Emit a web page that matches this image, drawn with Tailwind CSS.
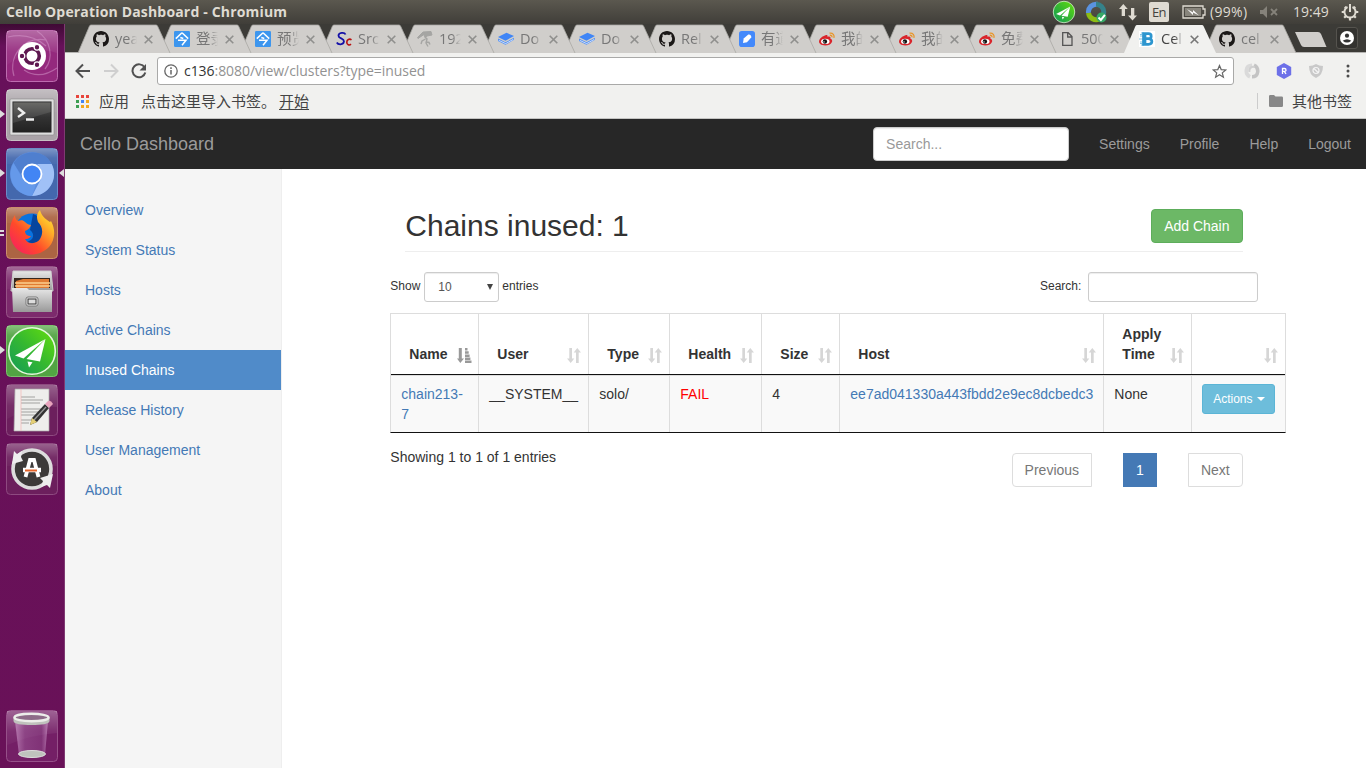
<!DOCTYPE html>
<html lang="zh">
<head>
<meta charset="utf-8">
<title>Cello Operation Dashboard</title>
<script src="https://cdn.jsdelivr.net/npm/@tailwindcss/browser@4"></script>
</head>
<body class="w-[1366px] h-[768px] overflow-hidden flex flex-col bg-white font-['Liberation_Sans',Arial,sans-serif] text-sm leading-5 text-[#333]">

<svg class="absolute w-0 h-0">
  <defs>
    <linearGradient id="gloss" x1="0" y1="0" x2="0" y2="1"><stop offset="0" stop-color="#fff" stop-opacity=".3"/><stop offset=".6" stop-color="#fff" stop-opacity=".07"/><stop offset="1" stop-color="#fff" stop-opacity=".03"/></linearGradient>
    <linearGradient id="metal" x1="0" y1="0" x2="0" y2="1"><stop offset="0" stop-color="#e8e8e8"/><stop offset="1" stop-color="#999"/></linearGradient>
    <linearGradient id="termbg" x1="0" y1="0" x2="0" y2="1"><stop offset="0" stop-color="#5b5b58"/><stop offset=".5" stop-color="#333"/><stop offset="1" stop-color="#222"/></linearGradient>
    <linearGradient id="green" x1="1" y1="0" x2="0" y2="1"><stop offset="0" stop-color="#66e00c"/><stop offset=".5" stop-color="#35b830"/><stop offset="1" stop-color="#119a5a"/></linearGradient>
    <linearGradient id="fox" x1="0" y1="1" x2="1" y2="0"><stop offset="0" stop-color="#f5156c"/><stop offset=".4" stop-color="#ff4a2a"/><stop offset=".75" stop-color="#ffb828"/><stop offset="1" stop-color="#fff04a"/></linearGradient>
    <linearGradient id="trash" x1="0" y1="0" x2="1" y2="0"><stop offset="0" stop-color="#d9a8d6" stop-opacity=".6"/><stop offset=".3" stop-color="#9a5796" stop-opacity=".55"/><stop offset=".8" stop-color="#8d4688" stop-opacity=".5"/><stop offset="1" stop-color="#d9a8d6" stop-opacity=".6"/></linearGradient>
    <symbol id="github" viewBox="0 0 16 16"><path fill="#1b1817" d="M8 0C3.58 0 0 3.58 0 8c0 3.54 2.29 6.53 5.47 7.59.4.07.55-.17.55-.38 0-.19-.01-.82-.01-1.49-2.01.37-2.53-.49-2.69-.94-.09-.23-.48-.94-.82-1.13-.28-.15-.68-.52-.01-.53.63-.01 1.08.58 1.23.82.72 1.21 1.87.87 2.33.66.07-.52.28-.87.51-1.07-1.78-.2-3.64-.89-3.64-3.95 0-.87.31-1.59.82-2.15-.08-.2-.36-1.02.08-2.12 0 0 .67-.21 2.2.82.64-.18 1.32-.27 2-.27s1.36.09 2 .27c1.53-1.04 2.2-.82 2.2-.82.44 1.1.16 1.92.08 2.12.51.56.82 1.27.82 2.15 0 3.07-1.87 3.75-3.65 3.95.29.25.54.73.54 1.48 0 1.07-.01 1.93-.01 2.2 0 .21.15.46.55.38A8.01 8.01 0 0 0 16 8c0-4.42-3.58-8-8-8z"/></symbol>
    <symbol id="jin" viewBox="0 0 16 16"><rect width="16" height="16" rx="1.2" fill="#3d96ee"/><path d="M8 1.800L1.800 7.600M8 1.800l6.200 5.800M6.300 6.500l3 1M4 9.300h8L8 14.200" stroke="#fff" stroke-width="1.500" fill="none"/></symbol>
    <symbol id="sc" viewBox="0 0 16 16"><path d="M9.500 3.500C8.500 1 2.500 1.500 2.500 4.700c0 3.200 6 2.300 5.400 6C7.400 14.200 2 14 .8 11.500" stroke="#1410a8" stroke-width="1.800" fill="none"/><path d="M15.500 8.800c-2-1.400-4.700-.2-4.700 2.400s2.500 3.500 4.200 2" stroke="#b81111" stroke-width="1.600" fill="none"/></symbol>
    <symbol id="figure" viewBox="0 0 16 16"><g fill="#a5a5a3" stroke="#a5a5a3"><path d="M6 1l8 -.5 1 3.500-5 1-2 1.500-1-3-6 4-.5-1z"/><path d="M8 6l2 2-1 4 2 3.500M8.500 8L5 10l-1 3M9 11l3 .5 1 2" fill="none" stroke-width="1.400"/></g></symbol>
    <symbol id="book" viewBox="0 0 16 16"><path d="M0 6L8.500 1.800 16 5 7.500 9.700z" fill="#3f85f6"/><path d="M0 7.500l7.500 3.800L16 6.800v2L7.500 13.800 0 10z" fill="#4b8df5"/><path d="M.7 9.300l7 3.300L15.400 8.300" stroke="#e8f0ff" stroke-width=".8" fill="none"/></symbol>
    <symbol id="pen" viewBox="0 0 16 16"><rect width="16" height="16" rx="2.800" fill="#4389fb"/><path d="M4 12l.7-4.400L9.300 3.500c1.700-.6 3.500 1.200 2.900 3L8 11.200z" fill="#fff"/></symbol>
    <symbol id="weibo" viewBox="0 0 16 16"><path d="M6.500 4.300c1.700-.6 2.300.1 1.900 1.500 2-.8 3.700-.2 2.900 1.600 4 1.500 1.400 7.100-5 7.100C2 14.500 0 12.500 0 10.600c0-2.800 3.500-5.500 6.500-6.300z" fill="#d9252b"/><ellipse cx="6.300" cy="10.400" rx="4.200" ry="2.700" fill="#fff"/><circle cx="5.900" cy="10.500" r="2.200" fill="#111"/><circle cx="5" cy="10.900" r=".7" fill="#fff"/><path d="M10.500 2.200c3.500-.6 5.200 2 4.300 4.700M10.800 4.300c1.700-.2 2.400.8 2 2" stroke="#e9962a" stroke-width="1.300" fill="none"/></symbol>
    <symbol id="page" viewBox="0 0 16 16"><path d="M3.700 1.700h5.500l3.800 3.800v8.800H3.700zM8.700 1.700V6H13" fill="none" stroke="#555" stroke-width="1.300"/></symbol>
    <symbol id="cello" viewBox="0 0 16 16"><rect width="16" height="16" fill="#fff"/><path d="M2 2h3M1 5h3M0 8h4M1 11h3M2 14h3M1 3.500h2M1 12.500h2" stroke="#7fc3e6" stroke-width="1.200"/><path d="M4.500 2.700H9.500c3.600 0 3.600 4.800 0 5 4.500.2 4.500 5.600 0 5.600H4.500zM6 2v12M4.500 7.700h5" stroke="#2d96cf" stroke-width="2.700" fill="none"/></symbol>
    <symbol id="plane" viewBox="0 0 52 52"><circle cx="26" cy="26" r="23.300" fill="url(#green)" stroke="#e5f8dd" stroke-width="1.600"/><path d="M39.500 14L9 30.500l8.500 3z" fill="#fff"/><path d="M39.500 14L20.500 34l13.500 2.500z" fill="#fff"/><path d="M21.500 36.500l5 .8-3.500 5.200z" fill="#fff"/></symbol>
    <symbol id="sort" viewBox="0 0 14 15"><path d="M2.300 0h2.700v10.500H7.300L3.700 15 0 10.500h2.300zM9 15V4.500H6.700L10.300 0l3.700 4.500h-2.300V15z" fill="#d6d6d6"/></symbol>
    <symbol id="sortasc" viewBox="0 0 15 15"><path d="M1.800 0h3v10.500H7L3.300 15 0 10.500h1.800zM8 0h2.500v2.500H8zM8 3.200h3.700v2.500H8zM8 6.400h4.600v2.500H8zM8 9.500h5.400v2.500H8zM8 12.600h6.500V15H8z" fill="#999"/></symbol>
  </defs>
</svg>

<!-- system panel -->
<div class="h-6 shrink-0 flex items-center bg-linear-to-b from-[#5b584f] to-[#403e39] text-[#dfdbd2] font-['Open_Sans','Noto_Sans',sans-serif]">
  <div class="ml-1.5 w-[700px] text-[14px] font-bold tracking-[0.17px] whitespace-nowrap">Cello Operation Dashboard - Chromium</div>
  <div class="ml-auto flex items-center">
    <svg class="size-6"><use href="#plane"/></svg>
    <svg class="size-[22px] ml-[9px]" viewBox="0 0 22 22" fill="none" stroke-width="5"><path d="M3.500 12a7.800 7.800 0 0 1 9-8.700" stroke="#5a93e0"/><path d="M11 3.200A7.800 7.800 0 0 1 18.800 11c0 2-1 4-2 5" stroke="#35828a"/><path d="M3.500 12a7.800 7.800 0 0 0 11 6" stroke="#8dbd13"/><circle cx="16.500" cy="16.500" r="5" fill="#36a967" stroke="none"/><path d="M13.500 16.500l2.400 2.400 4-5" stroke="#fff" stroke-width="2"/></svg>
    <svg class="w-[18px] h-[18px] ml-3" viewBox="0 0 18 18"><path d="M4.300 1l4.500 5H6v7H2.700V6H0zM13.500 17.500l4.500-5h-2.700V5H12v7.500H9z" fill="#dfdbd2"/></svg>
    <div class="ml-3 w-5 h-5 rounded-[2px] bg-[#dfdbd2] text-[#45433e] text-[13px] leading-5 text-center tracking-[-0.5px]">En</div>
    <svg class="w-6 h-[14px] ml-[13px]" viewBox="0 0 24 14"><path d="M1 1h20v3h2v6h-2v3H1z" fill="none" stroke="#dfdbd2" stroke-width="1.300"/><path d="M3 3h16v8H3z" fill="#88857c"/><path d="M5 4l6 3.500V5l6 5.500-6-3V10z" fill="#fff"/></svg>
    <div class="ml-[4px] w-[39px] text-[14px] whitespace-nowrap tracking-[0.3px]">(99%)</div>
    <svg class="w-[19px] h-3 ml-[11px]" viewBox="0 0 19 12"><path d="M0 4h3l4-4v12L3 8H0z" fill="#85827a"/><path d="M11 3l6 6M17 3l-6 6" stroke="#85827a" stroke-width="1.800"/></svg>
    <div class="ml-[14px] w-[37px] text-[14px] whitespace-nowrap">19:49</div>
    <svg class="size-[18px] ml-[11px] mr-[7px]" viewBox="0 0 18 18" fill="none" stroke="#dfdbd2"><path d="M6.500 4a5.600 5.600 0 1 0 5 0" stroke-width="2"/><path d="M9 1v8" stroke-width="2"/><path d="M3.800 3.800l1.700 1.700M14.200 3.800l-1.700 1.700M.7 9h3M14.300 9h3M3.200 14.800L5 13M14.800 14.800L13 13M9 17.500v-3" stroke-width="2.200"/></svg>
  </div>
</div>

<div class="flex-1 min-h-0 flex">
  <!-- launcher -->
  <nav class="w-[65px] shrink-0 bg-linear-to-b from-[#3f0a35] via-[#67105a] via-3% to-[#691158] border-r border-[#7f3a72] flex flex-col items-center gap-[7px] pt-1.5 pb-1.5">
    <svg class="size-[52px] shrink-0" viewBox="0 0 52 52"><rect x=".5" y=".5" width="51" height="51" rx="4" fill="#94297d" stroke="#bd6caf"/><path d="M1 1h50v22Q28 14 1 35z" fill="url(#gloss)"/><path d="M8 46C2 27 17 6 40 10M31 1c14 9 17 27 8 38M18 40c12 8 23 5 33-2M2 7c17-4 29 1 38 9" stroke="#d89bcd" stroke-width="1.200" fill="none" opacity=".5"/><circle cx="26" cy="26" r="14" fill="#fff"/><circle cx="26" cy="26" r="7.300" fill="none" stroke="#5e1750" stroke-width="3.600"/><g fill="#5e1750" stroke="#fff" stroke-width="1.200"><circle cx="16" cy="26" r="2.800"/><circle cx="31" cy="17.300" r="2.800"/><circle cx="31" cy="34.700" r="2.800"/></g></svg>
    <div class="relative size-[52px] shrink-0"><svg viewBox="0 0 52 52"><rect x=".5" y=".5" width="51" height="51" rx="4" fill="#aaa3a8" stroke="#c7c1c5"/><path d="M1 1h50v22H1z" fill="url(#gloss)"/><rect x="4" y="10" width="44" height="36" rx="1" fill="#dedede" stroke="#888" stroke-width=".6"/><rect x="7" y="13" width="38" height="30" fill="url(#termbg)" stroke="#222"/><path d="M7 13h38v10L7 34z" fill="#fff" opacity=".1"/><path d="M12 19l6 5-6 4M20 30.500h8" fill="none" stroke="#eee" stroke-width="2.400"/></svg><svg class="absolute -left-1.5 top-[21px] w-[5px] h-2" viewBox="0 0 5 8"><path d="M0 0l5 4-5 4z" fill="#ddd"/></svg></div>
    <div class="relative size-[52px] shrink-0"><svg viewBox="0 0 52 52"><rect x=".5" y=".5" width="51" height="51" rx="4" fill="#4468ad" stroke="#6b8cc8"/><path d="M1 1h50v15H1z" fill="url(#gloss)"/><circle cx="26" cy="26" r="22" fill="#5b8ddf"/><path d="M7.500 15A22 22 0 0 1 45.700 16H26q-7 1-10 12z" fill="#4f7fcf"/><path d="M26 16h19.700A22 22 0 0 1 26 48l9-17q3-9-4-15z" fill="#a0c1f7"/><path d="M7.500 15L18 33q5 5 12 3l-4 12A22 22 0 0 1 7.500 15z" fill="#6599ea"/><circle cx="26" cy="26" r="9.500" fill="#4285f4" stroke="#fff" stroke-width="1.800"/></svg><svg class="absolute -left-1.5 top-[21px] w-[5px] h-2" viewBox="0 0 5 8"><path d="M0 0l5 4-5 4z" fill="#ddd"/></svg><svg class="absolute -right-1.5 top-[21px] w-[5px] h-2" viewBox="0 0 5 8"><path d="M5 0L0 4l5 4z" fill="#ddd"/></svg></div>
    <div class="relative size-[52px] shrink-0"><svg viewBox="0 0 52 52"><rect x=".5" y=".5" width="51" height="51" rx="4" fill="#ac6443" stroke="#cc8e6c"/><path d="M1 1h50v15H1z" fill="url(#gloss)"/><circle cx="26" cy="24" r="17.500" fill="#0a73df"/><path d="M27 7c8 2 13 13 10 23-3 7-10 7-16 5 7-2 8-8 3-12z" fill="#06459e"/><path d="M9 8c0 3 1 5 3 6 3-1 5-1 7 1 2 2 4 3 6 3-1 3-3 5-6 6 0 3 2 5 6 5-2 3-4 3-6 3 3 6 12 5 15 0 4-7 2-13-2-17-2-5-1-9 2-12 1 5 5 9 10 12l1-1c5 9 4 19-2 26-10 10-26 10-34 0C1 30 3 17 9 8z" fill="url(#fox)"/></svg><div class="absolute -left-1.5 top-[23px] w-1 h-[6px] border-y-2 border-[#ddd]"></div></div>
    <svg class="size-[52px] shrink-0" viewBox="0 0 52 52"><rect x=".5" y=".5" width="51" height="51" rx="4" fill="#7c2a6c" stroke="#965386"/><path d="M1 1h50v22H1z" fill="url(#gloss)"/><path d="M7 5h38l2 20H5z" fill="url(#metal)" stroke="#ccc"/><path d="M8 12h36v10H8z" fill="#35271f"/><path d="M10 15l7-2h26v9H10z" fill="#e07b32"/><path d="M9 17h35M9 20h35" stroke="#fbd08e" stroke-width="1.500"/><path d="M6 22h15l2 2h23v22H7z" fill="url(#metal)"/><rect x="20" y="31" width="12" height="9" rx="2" fill="#eee" stroke="#777"/><rect x="22" y="33" width="8" height="5" fill="#ddd" stroke="#333"/></svg>
    <div class="relative size-[52px] shrink-0"><svg viewBox="0 0 52 52"><rect x=".5" y=".5" width="51" height="51" rx="4" fill="#52a443" stroke="#7bc26c"/><path d="M1 1h50v15H1z" fill="url(#gloss)"/><use href="#plane"/></svg><svg class="absolute -left-1.5 top-[21px] w-[5px] h-2" viewBox="0 0 5 8"><path d="M0 0l5 4-5 4z" fill="#ddd"/></svg></div>
    <svg class="size-[52px] shrink-0" viewBox="0 0 52 52"><rect x=".5" y=".5" width="51" height="51" rx="4" fill="#6c1f5d" stroke="#8e4a80"/><path d="M1 1h50v22Q28 20 1 35z" fill="url(#gloss)"/><path d="M9 5h34v42H8z" fill="#eeeeec" stroke="#aaa" stroke-width=".7"/><path d="M15 13h14M15 16h22M15 19h19M15 25h20M15 28h21M15 31h14M15 36h11M15 39h8" stroke="#999" stroke-width=".9"/><path d="M15 5v42" stroke="#f5b5b5" stroke-width=".7"/><path d="M24 41l2-7 13-14 4 4-12 14z" fill="#333"/><path d="M28 36l12-13" stroke="#999" stroke-width="1.300"/><path d="M24 41l2-7 5 4z" fill="#e4cf75"/><path d="M39 20l3-3q3-1 5 3l-4 4z" fill="#e8a3bd"/></svg>
    <svg class="size-[52px] shrink-0" viewBox="0 0 52 52"><rect x=".5" y=".5" width="51" height="51" rx="4" fill="#6c1f5d" stroke="#8e4a80"/><path d="M1 1h50v22H1z" fill="url(#gloss)"/><circle cx="26" cy="26" r="19" fill="#3c3a39" stroke="#ddd" stroke-width="3.600"/><path d="M6 21l2-13 3 3 5-3-1 6 2 4zM47 31l-3 14-3-3-6 2 2-6-3-3z" fill="#eee"/><path d="M19.500 34L24 17h4l4.500 17" fill="none" stroke="#fff" stroke-width="3.800"/><path d="M17 27h18" stroke="#fff" stroke-width="4.500"/><path d="M19 27.500h12" stroke="#e4642b" stroke-width="2"/></svg>
    <svg class="size-[52px] shrink-0 mt-auto" viewBox="0 0 52 52"><rect x=".5" y=".5" width="51" height="51" rx="4" fill="#741f66" stroke="#965089"/><path d="M1 1h50v22Q28 24 1 35z" fill="url(#gloss)"/><path d="M9 11h33l-3 34H13z" fill="url(#trash)"/><ellipse cx="26" cy="44" rx="13.500" ry="3.500" fill="#bfc2bd" stroke="#ddd"/><path d="M7.500 7v4c0 3 8 4 18 4s18-1 18-4V7z" fill="#bfc2bd"/><ellipse cx="25.500" cy="7.500" rx="17" ry="3.700" fill="#8d6c88" stroke="#eceeea" stroke-width="2.400"/></svg>
  </nav>

  <div class="flex-1 min-w-0 flex flex-col">
    <!-- tab strip -->
    <div class="h-[29px] shrink-0 flex bg-[#3c3b37] border-b border-[#b5b4b2] pl-[13px] font-['Open_Sans','Noto_Sans_CJK_SC',sans-serif]">
      <div id="tabs" class="flex isolate"></div>
      <svg class="w-8 h-[15px] ml-[11px] mt-2" viewBox="0 0 32 15"><path d="M0 0h23q2 0 3 2l5.500 13H9q-2 0-3-2z" fill="#d0cecb"/></svg>
      <div class="ml-auto mr-2 mt-[3px] size-[22px] rounded-[3px] border border-[#55534e] bg-[#33322f] flex items-center justify-center"><svg class="size-[14px]" viewBox="0 0 14 14"><circle cx="7" cy="7" r="7" fill="#fff"/><circle cx="7" cy="4.700" r="2.100" fill="#333"/><path d="M2.700 9.700Q7 6.700 11.300 9.700 7 13.500 2.700 9.700z" fill="#333"/></svg></div>
    </div>

    <!-- address bar -->
    <div class="h-[33px] shrink-0 flex items-center bg-[#f1f1ef] pl-[10px] pr-[14px] pt-[3px] font-['Open_Sans','Noto_Sans',sans-serif]">
      <svg class="size-4 shrink-0" viewBox="0 0 16 16"><path d="M15 8H1.500M8 1.500L1.500 8 8 14.500" fill="none" stroke="#505050" stroke-width="2"/></svg>
      <svg class="size-4 shrink-0 ml-3" viewBox="0 0 16 16"><path d="M1 8h13.500M8 1.500L14.500 8 8 14.500" fill="none" stroke="#cfcfcf" stroke-width="2"/></svg>
      <svg class="size-4 shrink-0 ml-3" viewBox="0 0 16 16"><path d="M13.600 4.500A6.500 6.500 0 1 0 14.300 9.500" fill="none" stroke="#505050" stroke-width="2"/><path d="M15 1v6.500H8.500z" fill="#505050"/></svg>
      <div class="ml-[10px] w-[1077px] h-7 shrink-0 rounded-[3px] border border-[#a9a9a8] bg-white flex items-center px-1.5">
        <svg class="size-[14px]" viewBox="0 0 14 14"><circle cx="7" cy="7" r="6.200" fill="none" stroke="#666" stroke-width="1.300"/><path d="M7 6v4.500M7 3.300v1.600" stroke="#666" stroke-width="1.500"/></svg>
        <span class="ml-1.5 text-[14px] tracking-[-0.05px] text-[#929292]"><span class="text-[#333]">c136</span>:8080/view/clusters?type=inused</span>
        <svg class="ml-auto size-[15px]" viewBox="0 0 15 15"><path d="M7.500 1.500l1.700 4.100 4.500.4-3.400 2.900 1.100 4.300-3.900-2.400-3.900 2.400 1.100-4.300L1.300 6l4.500-.4z" fill="none" stroke="#666" stroke-width="1.200"/></svg>
      </div>
      <svg class="size-4 ml-[10px]" viewBox="0 0 16 16" fill="none" stroke-width="3.500"><path d="M8 2.200c-7 0-7.500 9-2 11.600" stroke="#dadada"/><path d="M8 13.800c7 0 7.500-9 2-11.600" stroke="#c4c4c4"/><path d="M5.500 9C4.500 5 8 3 10.500 4" stroke="#d0d0d0" stroke-width="2"/></svg>
      <svg class="size-4 ml-4" viewBox="0 0 16 16"><path d="M8 0l7.200 4v8L8 16 .8 12V4z" fill="#6d70e8"/><path d="M6.500 11V5.500h2q1.500 0 1.500 1.500T8.500 8.300h-2M8.300 8.300L10 11" fill="none" stroke="#fff" stroke-width="1.300"/></svg>
      <svg class="w-[14px] h-[14px] ml-[17px]" viewBox="0 0 14 14"><path d="M7 0q3 2 7 2 0 9-7 12Q0 11 0 2q4 0 7-2z" fill="#c9c9c9"/><circle cx="7" cy="6.500" r="3" fill="none" stroke="#f4f4f4" stroke-width="1.200"/><path d="M5 4.500l4 4" stroke="#f4f4f4" stroke-width="1.200"/></svg>
      <svg class="w-1 h-[14px] ml-auto mr-[2px]" viewBox="0 0 4 14"><g fill="#4b4b4b"><circle cx="2" cy="2" r="1.500"/><circle cx="2" cy="7" r="1.500"/><circle cx="2" cy="12" r="1.500"/></g></svg>
    </div>

    <!-- bookmarks -->
    <div class="h-[33px] shrink-0 flex items-center bg-[#f1f1ef] border-b border-[#c4c4c2] pl-[11px] pr-[14px] pb-[2px] text-[15px] text-[#444] font-['Noto_Sans_CJK_SC',sans-serif]">
      <svg class="size-[13px]" viewBox="0 0 13 13"><g fill="#e8453c"><path d="M0 0h3v3H0zM5 0h3v3H5zM10 0h3v3h-3z"/></g><path d="M0 5h3v3H0zM0 10h3v3H0z" fill="#3d9e52"/><path d="M5 5h3v3H5z" fill="#4285f4"/><path d="M10 5h3v3h-3zM5 10h3v3H5zM10 10h3v3h-3z" fill="#f2a81d"/></svg>
      <span class="ml-[10px]">应用</span>
      <span class="ml-3">点击这里导入书签。</span>
      <span class="ml-[3px] underline underline-offset-2">开始</span>
      <span class="ml-auto w-px h-4 bg-[#ccc]"></span>
      <svg class="w-[14px] h-3 ml-[11px]" viewBox="0 0 14 12"><path d="M0 1.300Q0 0 1.300 0H5l1.500 1.500h6.200Q14 1.500 14 2.800v7.900q0 1.300-1.300 1.300H1.300Q0 12 0 10.700z" fill="#888"/></svg>
      <span class="ml-[9px]">其他书签</span>
    </div>

    <!-- page navbar -->
    <header class="h-[50px] shrink-0 flex items-center bg-[#272727] text-[#9b9b9b] pl-[15px]">
      <span class="text-lg">Cello Dashboard</span>
      <div class="ml-auto w-[196px] h-[34px] rounded border border-[#ccc] bg-white px-3 leading-8 text-[#999] shadow-[inset_0_1px_1px_rgba(0,0,0,0.08)]">Search...</div>
      <div class="flex ml-[15px]">
        <span class="px-[15px]">Settings</span><span class="px-[15px]">Profile</span><span class="px-[15px]">Help</span><span class="px-[15px]">Logout</span>
      </div>
    </header>

    <div class="flex-1 flex">
      <aside class="w-[217px] shrink-0 bg-[#f5f5f5] border-r border-[#eee] pt-[21px] text-[#4479b5]">
        <div class="h-10 px-5 py-[10px]">Overview</div>
        <div class="h-10 px-5 py-[10px]">System Status</div>
        <div class="h-10 px-5 py-[10px]">Hosts</div>
        <div class="h-10 px-5 py-[10px]">Active Chains</div>
        <div class="h-10 px-5 py-[10px] bg-[#508bc9] text-white">Inused Chains</div>
        <div class="h-10 px-5 py-[10px]">Release History</div>
        <div class="h-10 px-5 py-[10px]">User Management</div>
        <div class="h-10 px-5 py-[10px]">About</div>
      </aside>

      <main class="pl-[108.33px] pt-10">
        <div class="ml-[15px] w-[838px] h-[43px] border-b border-[#eee] flex justify-between items-start">
          <h1 class="text-[30px] leading-[33px]">Chains inused: 1</h1>
          <div class="h-[34px] w-[92px] pr-px text-center leading-8 rounded border border-[#5dad5b] bg-[#6cb866] text-white">Add Chain</div>
        </div>
        <div class="mt-5 w-[868px] h-[30px] flex items-center text-xs">
          <span class="pb-[2px]">Show</span>
          <div class="mx-1 w-[75px] h-[30px] rounded-[3px] border border-[#ccc] flex items-center justify-between pl-[13px] pr-[5px] text-[#555] shadow-[inset_0_1px_1px_rgba(0,0,0,0.075)]"><span>10</span><svg class="w-[6px] h-[6px]" viewBox="0 0 6 6"><path d="M0 0h6L3 6z" fill="#444"/></svg></div>
          <span class="pb-[2px] -ml-px">entries</span>
          <span class="ml-auto pb-[2px]">Search:</span>
          <div class="ml-[7px] w-[170px] h-[30px] rounded-[3px] border border-[#ccc] shadow-[inset_0_1px_1px_rgba(0,0,0,0.075)]"></div>
        </div>

        <div class="mt-[11px] w-[896px] border border-b-[#111] border-[#ddd]">
          <div class="h-[61px] grid grid-cols-[88px_110px_81px_92px_78px_264px_88px_93px] border-b border-[#111] font-bold">
            <div class="flex items-end justify-between border-r border-[#ddd] pl-[18px] pr-[6px] pb-[10px]">Name<svg class="w-[15px] h-[15px] mb-[1px]"><use href="#sortasc"/></svg></div>
            <div class="flex items-end justify-between border-r border-[#ddd] pl-[18px] pr-[7px] pb-[10px]">User<svg class="w-[14px] h-[15px] mb-[1px]"><use href="#sort"/></svg></div>
            <div class="flex items-end justify-between border-r border-[#ddd] pl-[18px] pr-[7px] pb-[10px]">Type<svg class="w-[14px] h-[15px] mb-[1px]"><use href="#sort"/></svg></div>
            <div class="flex items-end justify-between border-r border-[#ddd] pl-[18px] pr-[7px] pb-[10px]">Health<svg class="w-[14px] h-[15px] mb-[1px]"><use href="#sort"/></svg></div>
            <div class="flex items-end justify-between border-r border-[#ddd] pl-[18px] pr-[7px] pb-[10px]">Size<svg class="w-[14px] h-[15px] mb-[1px]"><use href="#sort"/></svg></div>
            <div class="flex items-end justify-between border-r border-[#ddd] pl-[18px] pr-[7px] pb-[10px]">Host<svg class="w-[14px] h-[15px] mb-[1px]"><use href="#sort"/></svg></div>
            <div class="flex items-end justify-between border-r border-[#ddd] pl-[18px] pr-[7px] pb-[10px]"><span>Apply<br>Time</span><svg class="w-[14px] h-[15px] mb-[1px]"><use href="#sort"/></svg></div>
            <div class="flex items-end justify-end pr-[7px] pb-[10px]"><svg class="w-[14px] h-[15px] mb-[1px]"><use href="#sort"/></svg></div>
          </div>
          <div class="h-[57px] grid grid-cols-[88px_110px_81px_92px_78px_264px_88px_93px] border-t border-[#ddd] bg-[#f9f9f9]">
            <div class="border-r border-[#ddd] pl-[10px] pt-2 text-[#4479b5]">chain213-<br>7</div>
            <div class="border-r border-[#ddd] pl-[10px] pt-2">__SYSTEM__</div>
            <div class="border-r border-[#ddd] pl-[10px] pt-2">solo/</div>
            <div class="border-r border-[#ddd] pl-[10px] pt-2 text-[#f00]">FAIL</div>
            <div class="border-r border-[#ddd] pl-[10px] pt-2">4</div>
            <div class="border-r border-[#ddd] pl-[10px] pt-2 text-[#4479b5]">ee7ad041330a443fbdd2e9ec8dcbedc3</div>
            <div class="border-r border-[#ddd] pl-[10px] pt-2">None</div>
            <div class="pl-[10px] pt-2"><div class="w-[73px] h-[30px] rounded-[3px] border border-[#5bb5d6] bg-[#6dbddb] text-white text-xs flex items-center justify-center gap-1">Actions<svg class="w-2 h-1" viewBox="0 0 8 4"><path d="M0 0h8L4 4z" fill="#fff"/></svg></div></div>
          </div>
        </div>

        <div class="w-[853px] flex justify-between">
          <span class="mt-[14px]">Showing 1 to 1 of 1 entries</span>
          <div class="mt-5 flex gap-[31px] text-[#777]">
            <span class="w-20 h-[34px] pr-px leading-8 text-center border border-[#ddd] rounded-l">Previous</span>
            <span class="w-[34px] h-[34px] pr-px leading-[34px] text-center bg-[#4479b5] text-white">1</span>
            <span class="w-[55px] h-[34px] pr-px leading-8 text-center border border-[#ddd] rounded-r">Next</span>
          </div>
        </div>
      </main>
    </div>
  </div>
</div>

<script>
  const tabs = [['github','yeas'],['jin','登录'],['jin','预览'],['sc','Src'],['figure','192'],['book','Do'],['book','Do'],['github','Rel'],['pen','有道'],['weibo','我的'],['weibo','我的'],['weibo','免费'],['page','500'],['cello','Cel'],['github','cel']];
  document.getElementById('tabs').innerHTML = tabs.map(([icon, label], i) => {
    const active = i === 13;
    return `<div class="relative h-7 flex items-center shrink-0 pl-[15px] pt-[2px]" style="width:${i < 6 ? 81 : 80}px;z-index:${active ? 50 : 20 - i}">
      <svg class="absolute left-0 top-0 w-[93px] h-[29px] -z-10" viewBox="0 0 93 29"><path d="M0 29L11.500 2Q12 1 13 1H78Q79 1 79.500 2L92 29" fill="${active ? '#f1f1ef' : '#d0cecb'}" stroke="#aaa8a5" stroke-width="${active ? 0 : .8}"/></svg>
      <svg class="size-4 shrink-0"><use href="#${icon}"/></svg>
      <span class="ml-[6px] w-[22px] overflow-hidden whitespace-nowrap text-[14.5px] leading-5 [mask-image:linear-gradient(to_right,black_60%,transparent)]" style="color:${active ? '#444' : '#777'}">${label}</span>
      <svg class="size-[9px] shrink-0 ml-[7px]" viewBox="0 0 9 9"><path d="M.7.7l7.600 7.600M8.300.7L.7 8.300" stroke="${active ? '#777' : '#8f8f8d'}" stroke-width="1.600"/></svg>
    </div>`;
  }).join('');
</script>
</body>
</html>
